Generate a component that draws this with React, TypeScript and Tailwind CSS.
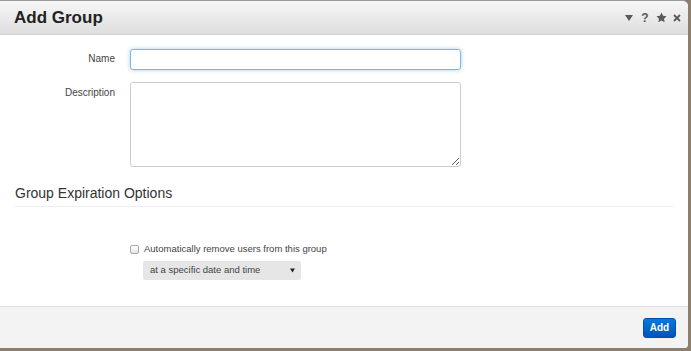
export default function App() {
  return (
    <div className="w-[691px] h-[351px] bg-[#8c7f6f] font-['Liberation_Sans',Arial,sans-serif] text-[#333]">
      <div className="w-[688px] h-[348px] bg-white rounded-br-[4px] rounded-tr-[6px] flex flex-col overflow-hidden border-t border-[#9a9a9a]">
        <div className="h-[34px] shrink-0 flex items-center justify-between pl-[14px] pr-[3px] border-b border-[#cfcfcf] bg-gradient-to-b from-[#f7f7f7] to-[#dedede]">
          <h1 className="text-[17px] font-bold text-[#222] leading-none">Add Group</h1>
          <div className="flex items-center text-[#5a5a5a] text-[12px] font-bold">
            <span className="w-[16px] flex justify-center">
              <svg width="8" height="6" viewBox="0 0 8 6"><path d="M0 0h8L4 6z" fill="#5a5a5a" /></svg>
            </span>
            <span className="w-[16px] text-center leading-none">?</span>
            <span className="w-[16px] flex justify-center">
              <svg width="11" height="11" viewBox="0 0 24 24"><path d="M12 1l3.4 7 7.6 1.1-5.5 5.4 1.3 7.6L12 18.5 5.2 22.1l1.3-7.6L1 9.1 8.6 8z" fill="#5a5a5a" /></svg>
            </span>
            <span className="w-[16px] flex justify-center">
              <svg width="8" height="8" viewBox="0 0 8 8"><path d="M1 1l6 6M7 1L1 7" stroke="#5a5a5a" strokeWidth="1.8" /></svg>
            </span>
          </div>
        </div>

        <div className="flex-1 flex flex-col">
          <div className="flex flex-col gap-[12px] pt-[14px]">
            <div className="flex items-start">
              <label className="w-[115px] text-right text-[10px] text-[#444] pt-[2px]">Name</label>
              <input className="ml-[15px] w-[331px] h-[21px] rounded-[3px] border border-[#7fb4e0] shadow-[0_0_4px_rgba(82,168,236,0.5)] outline-none" />
            </div>
            <div className="flex items-start">
              <label className="w-[115px] text-right text-[10px] text-[#444] pt-[3px]">Description</label>
              <textarea className="ml-[15px] w-[331px] h-[85px] rounded-[3px] border border-[#cccccc] outline-none" />
            </div>
          </div>

          <div className="mx-[15px] mt-[18px] pb-[5px] border-b border-[#eeeeee]">
            <h2 className="text-[14px] leading-[16px] text-[#333]">Group Expiration Options</h2>
          </div>

          <div className="pl-[130px] pt-[36px] flex flex-col gap-[6px]">
            <label className="flex items-center gap-[5px] text-[9.5px] leading-[12px] text-[#444]">
              <span className="w-[9px] h-[9px] border border-[#a8a8a8] rounded-[2px] bg-gradient-to-b from-white to-[#e4e4e4]" />
              Automatically remove users from this group
            </label>
            <div className="ml-[13px] w-[158px] h-[19px] bg-[#e6e6e6] rounded-[2px] flex items-center justify-between pl-[7px] pr-[6px] text-[9.5px] text-[#444]">
              <span>at a specific date and time</span>
              <svg width="5" height="5" viewBox="0 0 6 5"><path d="M0 0h6L3 5z" fill="#222" /></svg>
            </div>
          </div>
        </div>

        <div className="h-[42px] shrink-0 bg-[#f3f3f3] border-t border-[#dddddd] flex items-center justify-end pr-[12px]">
          <button className="w-[33px] h-[20px] rounded-[3px] bg-gradient-to-b from-[#0a78e0] to-[#0055b8] border border-[#0050a8] text-white text-[10px] font-bold">
            Add
          </button>
        </div>
      </div>
    </div>
  );
}
